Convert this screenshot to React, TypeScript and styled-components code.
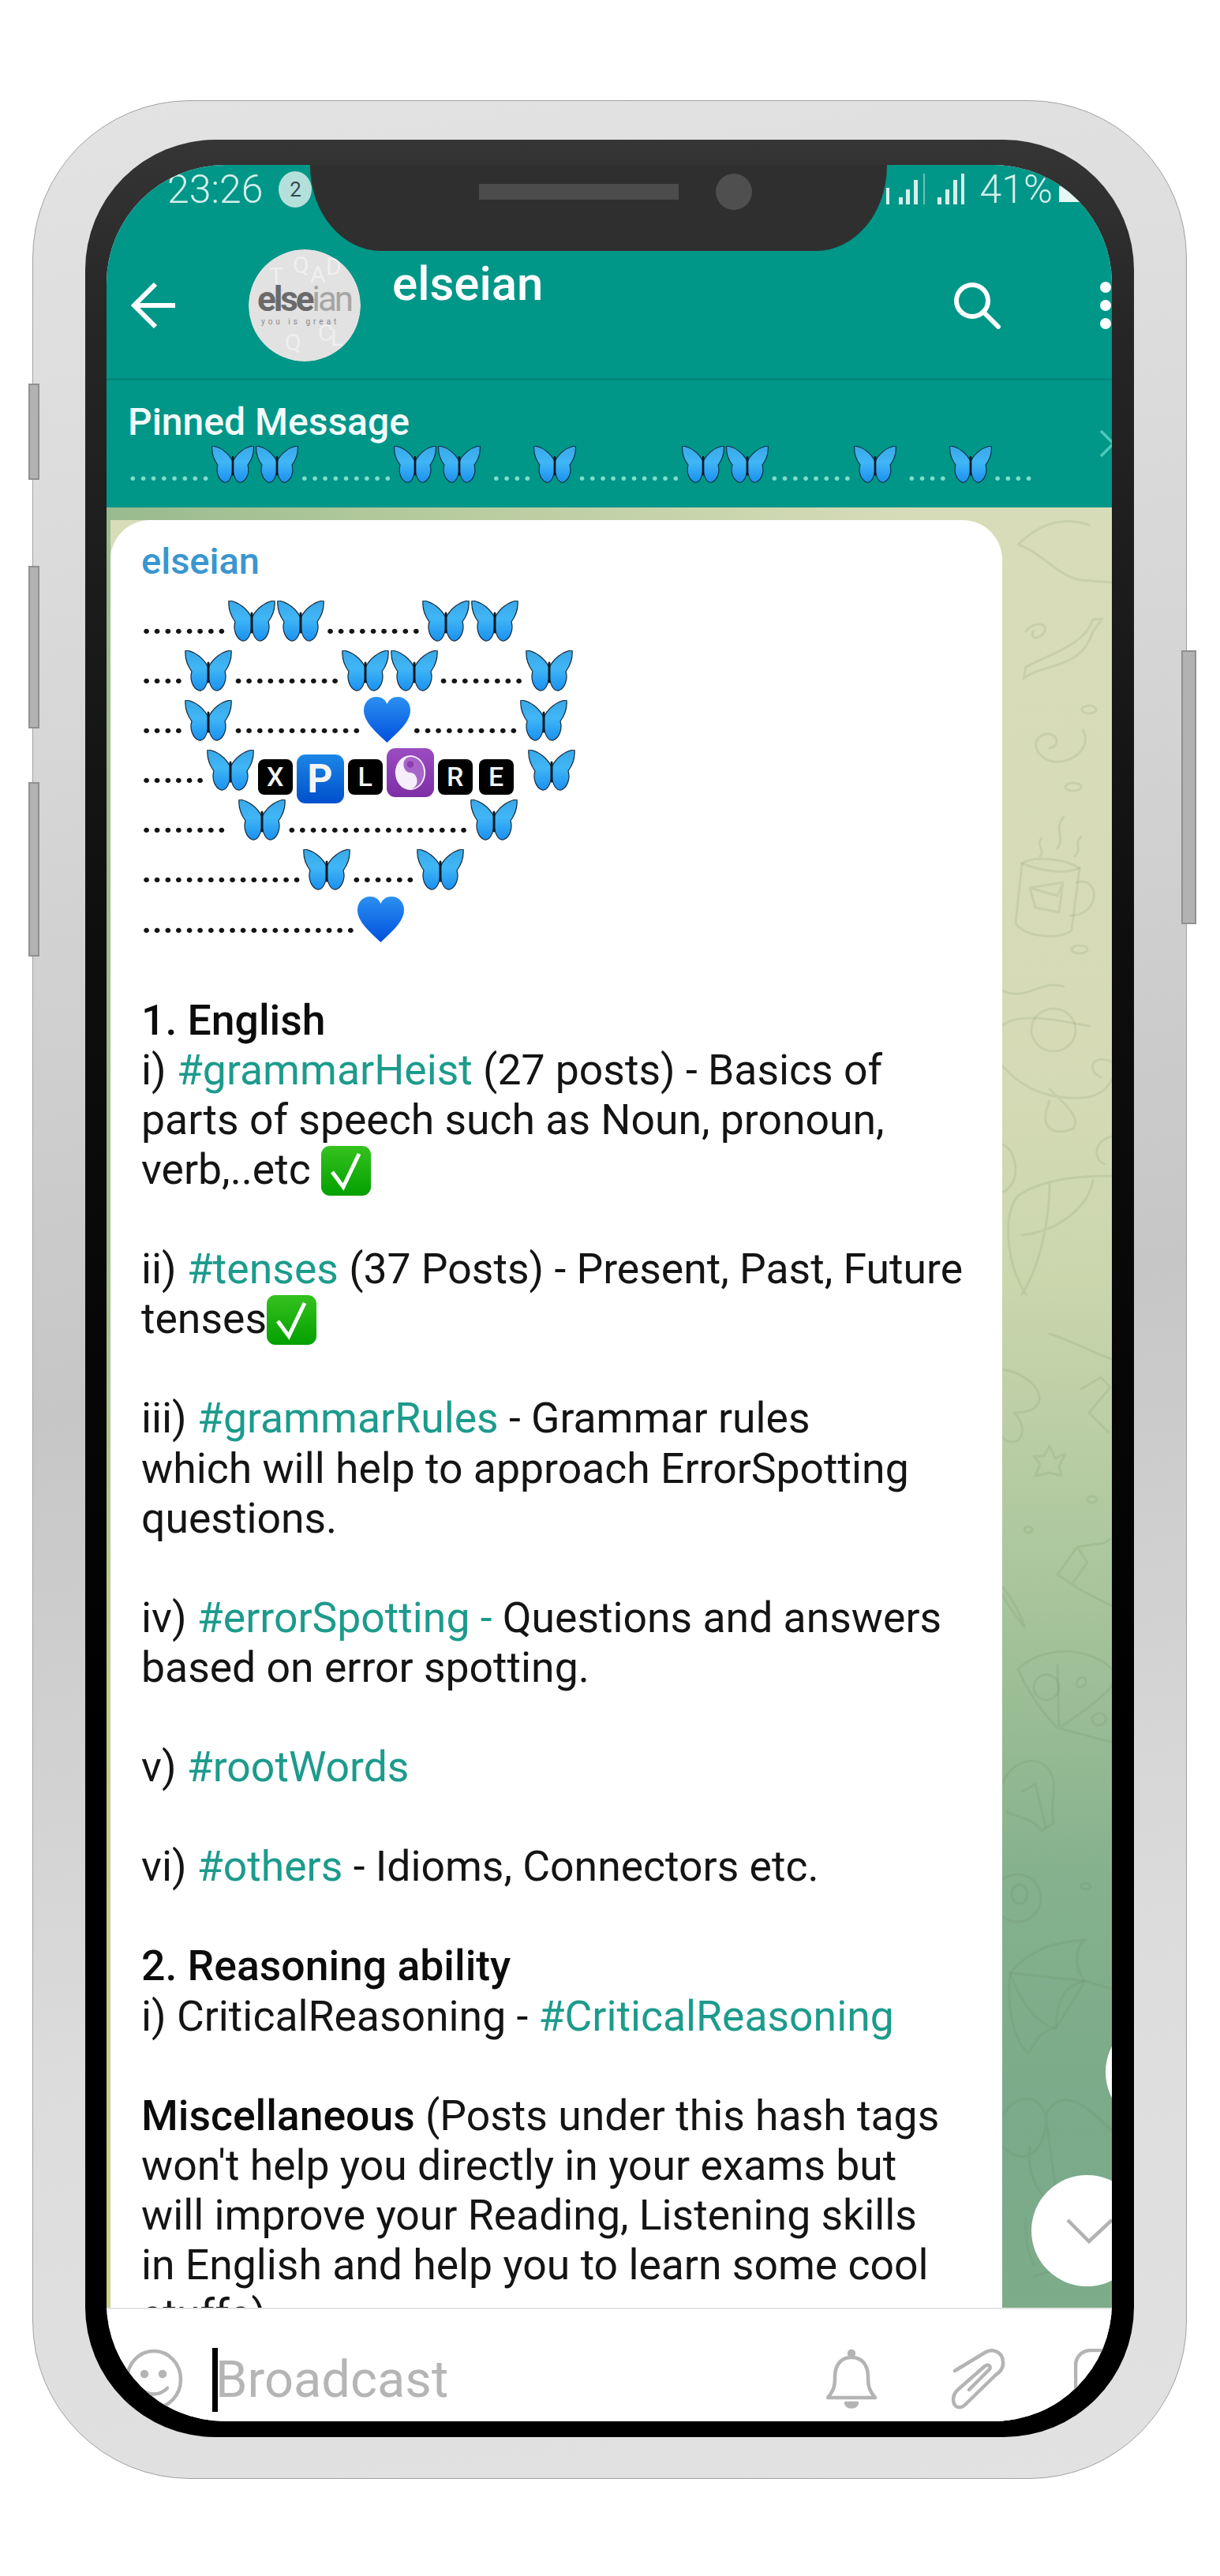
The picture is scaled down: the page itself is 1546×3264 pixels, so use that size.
import React from "react";
import styled, { createGlobalStyle } from "styled-components";

const GlobalStyle = createGlobalStyle`
    html, body {
        margin: 0;
        padding: 0;
        background: #ffffff;
    }
    #root {
        width: 1546px;
        height: 3264px;
        overflow: hidden;
        font-family: Roboto, "Liberation Sans", sans-serif;
    }
`;

const Page = styled.div`
    padding: 127px 0 0 41px;
`;

const PhoneBody = styled.div`
    position: relative;
    box-sizing: border-box;
    width: 1463px;
    height: 3014px;
    padding: 49px 66px 52px 66px;
    border: 1px solid #a2a2a2;
    border-radius: 200px;
    background: linear-gradient(172deg, #e3e3e3 0%, #dadada 20%, #c6c6c6 52%, #dcdcdc 78%, #e2e2e2 100%);
`;

const SideButton = styled.div<{ $top: number; $height: number; $side: "left" | "right" }>`
    position: absolute;
    box-sizing: border-box;
    top: ${(p) => p.$top}px;
    height: ${(p) => p.$height}px;
    ${(p) => (p.$side === "left" ? "left: -6px;" : "right: -13px;")}
    width: ${(p) => (p.$side === "left" ? 14 : 19)}px;
    background: #b2b2b2;
    border: 2px solid #909090;
`;

const Bezel = styled.div`
    box-sizing: border-box;
    height: 100%;
    padding: 32px 28px 20px 27px;
    border-radius: 165px;
    background: linear-gradient(180deg, #353535 0%, #262626 8%, #0e0e0e 35%, #000000 70%);
`;

const Screen = styled.div`
    position: relative;
    display: flex;
    flex-direction: column;
    height: 100%;
    overflow: hidden;
    border-radius: 150px;
    background: #ffffff;
`;

const Notch = styled.div`
    position: absolute;
    z-index: 5;
    top: 0;
    left: 258px;
    box-sizing: border-box;
    display: flex;
    align-items: flex-start;
    width: 731px;
    height: 109px;
    padding: 11px 0 0 214px;
    gap: 47px;
    border-radius: 0 0 90px 90px / 0 0 108px 108px;
    background: #2f2f2f;
`;

const Speaker = styled.div`
    width: 253px;
    height: 20px;
    margin-top: 13px;
    background: #4c4c4c;
`;

const Camera = styled.div`
    width: 46px;
    height: 46px;
    border-radius: 50%;
    background: #4f4f4f;
`;

const TealHeader = styled.div`
    background: #009688;
    color: #ffffff;
`;

const StatusRow = styled.div`
    box-sizing: border-box;
    display: flex;
    align-items: center;
    height: 86px;
    padding: 0 0 24px 77px;
    color: #d5f0ec;
    font-size: 50px;
    font-weight: 300;
`;

const Badge = styled.div`
    display: flex;
    align-items: center;
    justify-content: center;
    width: 42px;
    height: 46px;
    margin-left: 20px;
    border-radius: 50%;
    background: #b4e0db;
    color: #37474f;
    font-size: 26px;
    font-weight: 400;
`;

const StatusRight = styled.div`
    display: flex;
    align-items: center;
    margin-left: auto;
`;

const Percent = styled.span`
    margin: 0 8px 0 13px;
`;

const AppBar = styled.div`
    display: flex;
    align-items: center;
    height: 187px;
    padding-left: 31px;
    border-bottom: 3px solid #008a7c;
    box-sizing: border-box;
`;

const BackIcon = styled.svg`
    width: 58px;
    height: 58px;
    margin-right: 91px;
`;

const Avatar = styled.svg`
    width: 142px;
    height: 142px;
    margin-right: 40px;
`;

const ChatTitle = styled.div`
    align-self: flex-start;
    margin-top: 30px;
    font-size: 60px;
    font-weight: 500;
    line-height: 70px;
`;

const SearchIcon = styled.svg`
    width: 60px;
    height: 60px;
    margin-left: auto;
`;

const MenuDots = styled.div`
    display: flex;
    flex-direction: column;
    gap: 9px;
    margin: 0 1px 0 126px;
`;

const MenuDot = styled.i`
    display: block;
    width: 14px;
    height: 14px;
    border-radius: 50%;
    background: #ffffff;
`;

const PinnedBar = styled.div`
    position: relative;
    box-sizing: border-box;
    height: 161px;
    padding: 24px 0 0 27px;
`;

const PinnedTitle = styled.div`
    font-size: 48px;
    font-weight: 500;
    line-height: 58px;
    color: #f2fbfa;
`;

const PinnedRow = styled.div`
    display: flex;
    align-items: flex-end;
    height: 50px;
    margin-top: -2px;
    color: #7fdccd;
    font-size: 50px;
    line-height: 50px;
    white-space: pre;
`;

const PinnedDots = styled.span`
    margin-bottom: -5px;
`;

const PinnedChevron = styled.svg`
    position: absolute;
    top: 62px;
    right: -4px;
    width: 20px;
    height: 36px;
`;

const Wallpaper = styled.div`
    position: relative;
    flex: 1;
    min-height: 0;
    overflow: hidden;
    padding: 16px 0 0 5px;
    background-color: #c4d3a8;
    background-image:
        linear-gradient(90deg, #98ba8e 0%, #b4ca9c 30%, #d7dcb8 80%),
        linear-gradient(180deg, #98ba8e 0%, #a2bf90 40%, #c4cc8c 65%, #cfd28a 100%),
        linear-gradient(180deg, #d8dcb9 0%, #d6dbb6 30%, #cbd6ad 43%, #a9c59c 60%, #85b18d 76%, #7aaa8a 90%, #7dac8a 100%);
    background-size: 100% 16px, 5px 100%, 100% 100%;
    background-repeat: no-repeat;
`;

const Doodles = styled.svg`
    position: absolute;
    top: 0;
    right: 0;
    width: 139px;
    height: 2281px;
    fill: none;
    stroke: #5a7a48;
    stroke-opacity: 0.12;
    stroke-width: 3;
    stroke-linecap: round;
    stroke-linejoin: round;
`;

const Bubble = styled.div`
    position: relative;
    box-sizing: border-box;
    width: 1130px;
    padding: 20px 0 0 39px;
    border-radius: 50px 50px 0 0;
    background: #ffffff;
    color: #141414;
    font-size: 53.5px;
    font-weight: 400;
`;

const SenderName = styled.div`
    height: 74px;
    color: #3a96d0;
    font-size: 47px;
    font-weight: 500;
    line-height: 64px;
`;

const Line = styled.div`
    height: 63.1px;
    line-height: 63.1px;
    white-space: pre;
`;

const HeartGap = styled.div`
    height: 66px;
`;

const BlankLine = styled.div`
    height: 63.1px;
`;

const HashTag = styled.span`
    color: #1c9b8c;
`;

const Strong = styled.span`
    font-weight: 500;
    color: #0c0c0c;
`;

const DotText = styled.span`
    font-size: 49px;
    font-weight: 500;
`;

const EmojiSvg = styled.svg<{ $w: number; $h: number; $drop: number }>`
    display: inline-block;
    width: ${(p) => p.$w}px;
    height: ${(p) => p.$h}px;
    vertical-align: ${(p) => -p.$drop}px;
`;

const Key = styled.span<{ $big?: boolean; $bg: string }>`
    display: inline-flex;
    align-items: center;
    justify-content: center;
    box-sizing: border-box;
    width: ${(p) => (p.$big ? 60 : 44)}px;
    height: ${(p) => (p.$big ? 62 : 45)}px;
    margin: 0 ${(p) => (p.$big ? 1 : 4)}px;
    vertical-align: ${(p) => (p.$big ? -12 : -4)}px;
    border-radius: ${(p) => (p.$big ? 11 : 8)}px;
    background: ${(p) => p.$bg};
    color: #f4f4f4;
    font-size: ${(p) => (p.$big ? 50 : 34)}px;
    font-weight: ${(p) => (p.$big ? 700 : 500)};
    line-height: 1;
`;

const ScrollButton = styled.div<{ $bottom: number; $right: number }>`
    position: absolute;
    box-sizing: border-box;
    display: flex;
    align-items: center;
    width: 141px;
    height: 141px;
    padding-left: 44px;
    bottom: ${(p) => p.$bottom}px;
    right: ${(p) => p.$right}px;
    border-radius: 50%;
    background: #ffffff;
`;

const Composer = styled.div`
    box-sizing: border-box;
    display: flex;
    align-items: center;
    height: 144px;
    padding: 36px 0 0 23px;
    border-top: 2px solid #e4e4e4;
    background: #ffffff;
`;

const ComposerIcon = styled.svg<{ $w: number; $left: number }>`
    flex: none;
    width: ${(p) => p.$w}px;
    height: 78px;
    margin-left: ${(p) => p.$left}px;
    fill: none;
    stroke: #b4b4b4;
    stroke-width: 4.5;
    stroke-linecap: round;
    stroke-linejoin: round;
`;

const Caret = styled.div`
    flex: none;
    width: 7px;
    height: 81px;
    margin-left: 37px;
    background: #000000;
`;

const Placeholder = styled.div`
    margin-left: -3px;
    color: #b5b5b5;
    font-size: 65px;
    font-weight: 400;
    line-height: 81px;
`;

const Butterfly = ({ w = 62, h = 52, drop = 10 }: { w?: number; h?: number; drop?: number }) => (
    <EmojiSvg $w={w} $h={h} $drop={drop} viewBox="0 0 60 52">
        <g stroke="#14283a" strokeWidth="1.2" strokeLinejoin="round" fill="url(#wingFill)">
            <path d="M30 22C25 11 13 1 1 0C0 10 4 20 9 27C6 36 10 48 18 51C24 52 28 45 30 34Z" />
            <path d="M30 22C35 11 47 1 59 0C60 10 56 20 51 27C54 36 50 48 42 51C36 52 32 45 30 34Z" />
        </g>
        <path d="M30 16V40" stroke="#101820" strokeWidth="3" strokeLinecap="round" />
    </EmojiSvg>
);

const Heart = ({ drop }: { drop: number }) => (
    <EmojiSvg $w={63} $h={58} $drop={drop} viewBox="0 0 63 58">
        <path d="M31.5 58C18 45 2 32 2 17C2 7 9 0 18 0C24 0 29 3 31.5 9C34 3 39 0 45 0C54 0 61 7 61 17C61 32 45 45 31.5 58Z" fill="url(#heartFill)" />
    </EmojiSvg>
);

const CheckMark = () => (
    <EmojiSvg $w={63} $h={63} $drop={15} viewBox="0 0 63 63">
        <rect width="63" height="63" rx="11" fill="url(#checkFill)" />
        <path d="M14 33L28 52L48 10" fill="none" stroke="#ffffff" strokeWidth="5" strokeLinejoin="miter" />
    </EmojiSvg>
);

const YinYang = () => (
    <svg width="44" height="50" viewBox="0 0 46 50">
        <ellipse cx="23" cy="25" rx="20" ry="23" fill="#f6eefa" />
        <path d="M23 4C34 4 41 14 41 25C41 36 34 46 23 46C28 46 32 42 32 36C32 30 28 25 23 25C18 25 14 20 14 14C14 8 18 4 23 4Z" fill="#a765c9" />
        <circle cx="23" cy="14" r="4.5" fill="#8d3db0" />
        <circle cx="23" cy="36" r="4.5" fill="#f6eefa" />
    </svg>
);

const EmojiDefs = () => (
    <svg width="0" height="0" style={{ position: "absolute" }}>
        <defs>
            <linearGradient id="wingFill" x1="0" y1="0" x2="0" y2="1">
                <stop offset="0" stopColor="#3aa8e6" />
                <stop offset="0.45" stopColor="#40b6f6" />
                <stop offset="1" stopColor="#1a90f0" />
            </linearGradient>
            <linearGradient id="heartFill" x1="0" y1="0" x2="0" y2="1">
                <stop offset="0" stopColor="#2c90f2" />
                <stop offset="1" stopColor="#0050dc" />
            </linearGradient>
            <linearGradient id="checkFill" x1="0" y1="0" x2="0" y2="1">
                <stop offset="0" stopColor="#35c21f" />
                <stop offset="1" stopColor="#03a000" />
            </linearGradient>
            <clipPath id="avatarClip">
                <circle cx="71" cy="71" r="71" />
            </clipPath>
        </defs>
    </svg>
);

const dots = (n: number) => <DotText>{".".repeat(n)}</DotText>;

function Hearts() {
    return (
        <>
            <Line>{dots(8)}<Butterfly /><Butterfly />{dots(9)}<Butterfly /><Butterfly /></Line>
            <Line>{dots(4)}<Butterfly />{dots(10)}<Butterfly /><Butterfly />{dots(8)}<Butterfly /></Line>
            <Line>{dots(4)}<Butterfly />{dots(12)}<Heart drop={12} />{dots(10)}<Butterfly /></Line>
            <Line>
                {dots(6)}<Butterfly />
                <Key $bg="#000">X</Key>
                <Key $big $bg="linear-gradient(180deg,#1c86e6,#0050cc)">P</Key>
                <Key $bg="#000">L</Key>
                <Key $big $bg="linear-gradient(180deg,#9a4cc0,#7d2fa6)"><YinYang /></Key>
                <Key $bg="#000">R</Key>
                <Key $bg="#000">E</Key>
                {" "}<Butterfly />
            </Line>
            <Line>{dots(8)} <Butterfly />{dots(17)}<Butterfly /></Line>
            <Line>{dots(15)}<Butterfly />{dots(6)}<Butterfly /></Line>
            <Line>{dots(20)}<Heart drop={12} /></Line>
        </>
    );
}

export default function App() {
    return (
        <Page>
            <GlobalStyle />
            <EmojiDefs />
            <PhoneBody>
                <SideButton $side="left" $top={358} $height={122} />
                <SideButton $side="left" $top={589} $height={206} />
                <SideButton $side="left" $top={863} $height={221} />
                <SideButton $side="right" $top={696} $height={347} />
                <Bezel>
                    <Screen>
                        <Notch>
                            <Speaker />
                            <Camera />
                        </Notch>
                        <TealHeader>
                            <StatusRow>
                                <span>23:26</span>
                                <Badge>2</Badge>
                                <StatusRight>
                                    <svg width="106" height="40" viewBox="0 0 106 40" fill="#d5f0ec">
                                        <rect x="0" y="18" width="4" height="21" />
                                        <rect x="16" y="30" width="5" height="9" />
                                        <rect x="25" y="20" width="5" height="19" />
                                        <rect x="35" y="8" width="5" height="31" />
                                        <rect x="47" y="0" width="2" height="39" opacity="0.5" />
                                        <rect x="65" y="30" width="5" height="9" />
                                        <rect x="75" y="20" width="5" height="19" />
                                        <rect x="85" y="8" width="5" height="31" />
                                        <rect x="95" y="0" width="4" height="39" />
                                    </svg>
                                    <Percent>41%</Percent>
                                    <svg width="67" height="36" viewBox="0 0 67 36" fill="#e8f6f4">
                                        <rect x="0" y="14" width="67" height="20" />
                                    </svg>
                                </StatusRight>
                            </StatusRow>
                            <AppBar>
                                <BackIcon viewBox="0 0 58 58" fill="none" stroke="#ffffff" strokeWidth="6">
                                    <path d="M56 29H5M31 2L4 29L31 56" />
                                </BackIcon>
                                <Avatar viewBox="0 0 142 142">
                                    <g clipPath="url(#avatarClip)">
                                        <circle cx="71" cy="71" r="71" fill="#e2e2e2" />
                                        <g fill="#efefef" fontFamily="Roboto, sans-serif" fontSize="30">
                                            <text x="78" y="42">A</text>
                                            <text x="56" y="30">Q</text>
                                            <text x="98" y="32">D</text>
                                            <text x="26" y="44">T</text>
                                            <text x="46" y="128">Q</text>
                                            <text x="88" y="116">C</text>
                                            <text x="104" y="122">L</text>
                                        </g>
                                        <text x="11" y="78" fontFamily="Roboto, sans-serif" fontSize="44" fontWeight="700" fill="#6a6a6a" textLength="122">
                                            else<tspan fill="#a5a5a5" fontWeight="400">ian</tspan>
                                        </text>
                                        <text x="16" y="95" fontFamily="Roboto, sans-serif" fontSize="10" letterSpacing="4" fill="#8a8a8a">you is great</text>
                                    </g>
                                </Avatar>
                                <ChatTitle>elseian</ChatTitle>
                                <SearchIcon viewBox="0 0 60 60" fill="none" stroke="#ffffff" strokeWidth="6">
                                    <circle cx="24" cy="24" r="20" />
                                    <path d="M38 38L57 57" strokeLinecap="round" />
                                </SearchIcon>
                                <MenuDots>
                                    <MenuDot />
                                    <MenuDot />
                                    <MenuDot />
                                </MenuDots>
                            </AppBar>
                            <PinnedBar>
                                <PinnedTitle>Pinned Message</PinnedTitle>
                                <PinnedRow>
                                    <PinnedDots>{".".repeat(8)}</PinnedDots>
                                    <Butterfly w={56} h={47} drop={0} /><Butterfly w={56} h={47} drop={0} />
                                    <PinnedDots>{".".repeat(9)}</PinnedDots>
                                    <Butterfly w={56} h={47} drop={0} /><Butterfly w={56} h={47} drop={0} />
                                    <PinnedDots>{" ...."}</PinnedDots>
                                    <Butterfly w={56} h={47} drop={0} />
                                    <PinnedDots>{".".repeat(10)}</PinnedDots>
                                    <Butterfly w={56} h={47} drop={0} /><Butterfly w={56} h={47} drop={0} />
                                    <PinnedDots>{".".repeat(8)}</PinnedDots>
                                    <Butterfly w={56} h={47} drop={0} />
                                    <PinnedDots>{" ...."}</PinnedDots>
                                    <Butterfly w={56} h={47} drop={0} />
                                    <PinnedDots>{"...."}</PinnedDots>
                                </PinnedRow>
                                <PinnedChevron viewBox="0 0 20 36" fill="none" stroke="#4fc9b8" strokeWidth="3.5">
                                    <path d="M2 2L18 18L2 34" />
                                </PinnedChevron>
                            </PinnedBar>
                        </TealHeader>
                        <Wallpaper>
                            <Doodles viewBox="1270 643 139 2281">
                                <path d="M1290 690C1320 700 1340 730 1370 735L1409 738M1290 690C1320 660 1350 655 1380 665" />
                                <path d="M1297 860C1320 840 1370 850 1385 800L1397 784L1385 785C1375 815 1340 825 1300 845Z" />
                                <path d="M1300 800C1310 785 1335 790 1320 805C1310 812 1305 805 1310 800" />
                                <ellipse cx="1380" cy="899" rx="9" ry="5" />
                                <path d="M1372 925C1385 945 1360 968 1335 965C1310 960 1305 935 1325 930C1340 928 1345 945 1330 948" />
                                <ellipse cx="1360" cy="997" rx="10" ry="5" />
                                <path d="M1295 1094L1287 1170C1300 1190 1350 1190 1358 1178L1368 1100C1350 1088 1310 1084 1295 1094Z" />
                                <path d="M1295 1094C1320 1104 1350 1108 1368 1100M1364 1118C1395 1110 1395 1160 1356 1160" />
                                <path d="M1305 1125L1347 1118L1342 1156L1312 1150Z M1305 1125L1340 1135L1347 1118" />
                                <path d="M1318 1085C1325 1075 1312 1072 1320 1062M1340 1075C1350 1060 1335 1050 1348 1035M1362 1085C1372 1075 1360 1070 1370 1060" />
                                <ellipse cx="1368" cy="1203" rx="10" ry="5" />
                                <path d="M1270 1255C1300 1270 1320 1240 1348 1250M1270 1300C1290 1280 1350 1295 1380 1300" />
                                <ellipse cx="1335" cy="1305" rx="28" ry="27" />
                                <path d="M1270 1350C1300 1385 1340 1395 1380 1390C1400 1385 1405 1375 1409 1368M1330 1380C1350 1400 1370 1415 1360 1430C1335 1440 1315 1430 1330 1395" />
                                <path d="M1409 1345C1385 1335 1375 1355 1395 1365" />
                                <path d="M1270 1450C1285 1455 1290 1480 1285 1495C1280 1505 1275 1510 1270 1510" />
                                <path d="M1409 1440C1385 1445 1385 1470 1400 1475" />
                                <path d="M1409 1490C1360 1490 1320 1495 1290 1515C1270 1540 1275 1600 1300 1640M1295 1565C1340 1560 1380 1530 1385 1495M1330 1500C1330 1540 1320 1600 1295 1640" />
                                <path d="M1330 1690C1360 1700 1400 1720 1409 1722" />
                                <path d="M1270 1735C1300 1740 1320 1760 1317 1775C1312 1790 1290 1790 1285 1790C1295 1800 1300 1815 1290 1825C1280 1830 1272 1825 1270 1820" />
                                <path d="M1330 1832L1337 1848L1350 1842L1342 1858L1345 1870L1330 1866L1312 1870L1318 1855L1310 1845L1323 1845Z" />
                                <path d="M1370 1760L1395 1745L1407 1758L1380 1790L1405 1815" />
                                <ellipse cx="1384" cy="1900" rx="6" ry="4" />
                                <ellipse cx="1303" cy="1938" rx="5" ry="4" />
                                <path d="M1340 1995L1365 1960L1400 1955L1407 1950M1340 1995L1370 2015L1409 2035M1365 1960L1378 1980L1360 2005" />
                                <path d="M1270 2010C1285 2030 1290 2040 1298 2060M1270 2020C1280 2040 1290 2050 1298 2062" />
                                <path d="M1290 2115C1320 2085 1380 2085 1409 2115M1290 2115C1310 2160 1335 2185 1342 2190C1365 2195 1395 2205 1409 2207M1342 2190L1340 2110M1342 2190C1370 2170 1400 2150 1409 2135" />
                                <circle cx="1326" cy="2138" r="16" />
                                <path d="M1365 2130C1370 2122 1380 2125 1375 2135C1368 2140 1362 2138 1365 2130ZM1385 2175C1395 2165 1405 2175 1400 2183C1390 2190 1380 2182 1385 2175Z" />
                                <path d="M1270 2260C1285 2225 1325 2220 1335 2255C1338 2280 1330 2285 1335 2310L1320 2320C1305 2300 1290 2305 1275 2295" />
                                <path d="M1295 2270L1305 2265L1312 2260L1325 2315" />
                                <circle cx="1289" cy="2405" r="30" />
                                <ellipse cx="1292" cy="2400" rx="10" ry="12" />
                                <ellipse cx="1376" cy="2390" rx="6" ry="4" />
                                <path d="M1280 2500C1310 2465 1345 2460 1375 2458C1360 2470 1362 2495 1375 2510C1350 2515 1340 2530 1338 2570C1315 2565 1295 2540 1280 2500Z" />
                                <path d="M1280 2500C1275 2545 1285 2585 1303 2602C1310 2590 1320 2570 1338 2570M1280 2500L1375 2510L1338 2570M1375 2510L1409 2520" />
                                <path d="M1409 2700C1380 2670 1345 2640 1325 2680C1315 2650 1285 2655 1271 2680M1325 2680L1340 2790M1305 2720C1300 2760 1320 2780 1335 2800M1271 2720C1300 2750 1325 2720 1325 2690" />
                                <path d="M1310 2885C1340 2870 1380 2880 1409 2870M1300 2810C1298 2840 1305 2860 1310 2870" />
                            </Doodles>
                            <Bubble>
                                <SenderName>elseian</SenderName>
                                <Hearts />
                                <HeartGap />
                                <Line><Strong>1. English</Strong></Line>
                                <Line>i) <HashTag>#grammarHeist</HashTag> (27 posts) - Basics of</Line>
                                <Line>parts of speech such as Noun, pronoun,</Line>
                                <Line>verb,..etc <CheckMark /></Line>
                                <BlankLine />
                                <Line>ii) <HashTag>#tenses</HashTag> (37 Posts) - Present, Past, Future</Line>
                                <Line>tenses<CheckMark /></Line>
                                <BlankLine />
                                <Line>iii) <HashTag>#grammarRules</HashTag> - Grammar rules</Line>
                                <Line>which will help to approach ErrorSpotting</Line>
                                <Line>questions.</Line>
                                <BlankLine />
                                <Line>iv) <HashTag>#errorSpotting -</HashTag> Questions and answers</Line>
                                <Line>based on error spotting.</Line>
                                <BlankLine />
                                <Line>v) <HashTag>#rootWords</HashTag></Line>
                                <BlankLine />
                                <Line>vi) <HashTag>#others</HashTag> - Idioms, Connectors etc.</Line>
                                <BlankLine />
                                <Line><Strong>2. Reasoning ability</Strong></Line>
                                <Line>i) CriticalReasoning - <HashTag>#CriticalReasoning</HashTag></Line>
                                <BlankLine />
                                <Line><Strong>Miscellaneous</Strong> (Posts under this hash tags</Line>
                                <Line>won't help you directly in your exams but</Line>
                                <Line>will improve your Reading, Listening skills</Line>
                                <Line>in English and help you to learn some cool</Line>
                                <Line>stuffs)</Line>
                            </Bubble>
                            <ScrollButton $bottom={228} $right={-133} />
                            <ScrollButton $bottom={27} $right={-39}>
                                <svg width="60" height="34" viewBox="0 0 60 34" fill="none" stroke="#b2b2b2" strokeWidth="4.5">
                                    <path d="M2 3L29 30L58 3" />
                                </svg>
                            </ScrollButton>
                        </Wallpaper>
                        <Composer>
                            <ComposerIcon $w={74} $left={0} viewBox="0 0 74 78">
                                <ellipse cx="37" cy="39" rx="34" ry="36" />
                                <circle cx="25" cy="32" r="3" fill="#b4b4b4" />
                                <circle cx="48" cy="32" r="3" fill="#b4b4b4" />
                                <path d="M20 50C28 60 44 60 54 50" />
                            </ComposerIcon>
                            <Caret />
                            <Placeholder>Broadcast</Placeholder>
                            <ComposerIcon $w={66} $left={478} viewBox="0 0 66 78">
                                <path d="M3 62C10 54 12 48 12 36C12 20 20 11 33 11C46 11 54 20 54 36C54 48 56 54 63 62Z" />
                                <circle cx="33" cy="6" r="3" fill="#b4b4b4" />
                                <path d="M26 69C28 75 38 75 40 69Z" fill="#b4b4b4" />
                            </ComposerIcon>
                            <ComposerIcon $w={68} $left={94} viewBox="0 0 68 78">
                                <path d="M4 28L42 5C52 -1 64 4 65 16C66 24 62 29 56 33L18 70C10 78 2 74 2 64C2 58 5 54 10 50L42 22C46 19 50 22 48 26L22 52" />
                            </ComposerIcon>
                            <ComposerIcon $w={80} $left={87} viewBox="0 0 80 78">
                                <path d="M2 66V22C2 10 10 2 22 2H58C70 2 78 10 78 22V50" />
                            </ComposerIcon>
                        </Composer>
                    </Screen>
                </Bezel>
            </PhoneBody>
        </Page>
    );
}
